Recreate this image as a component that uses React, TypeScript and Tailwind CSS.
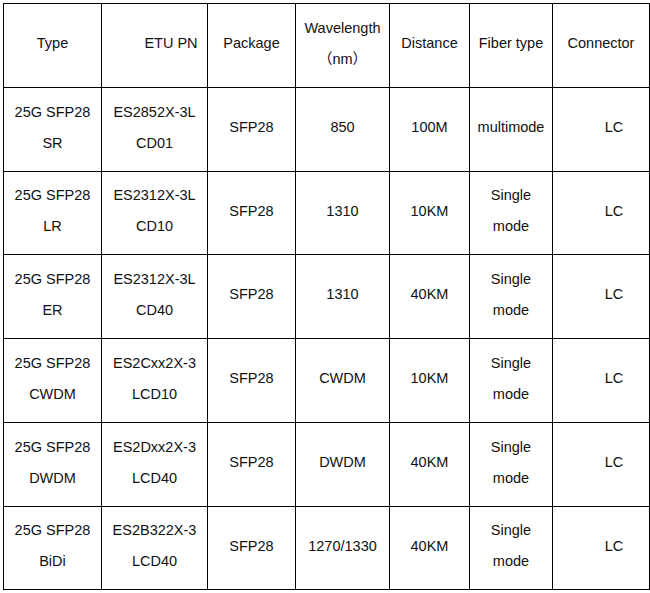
import React from 'react';

type Row = {
  type: [string, string];
  pn: [string, string];
  pkg: string;
  wave: string;
  dist: string;
  fiber: string[];
  h: string;
};

const rows: Row[] = [
  { type: ['25G SFP28', 'SR'], pn: ['ES2852X-3L', 'CD01'], pkg: 'SFP28', wave: '850', dist: '100M', fiber: ['multimode'], h: 'h-[84px]' },
  { type: ['25G SFP28', 'LR'], pn: ['ES2312X-3L', 'CD10'], pkg: 'SFP28', wave: '1310', dist: '10KM', fiber: ['Single', 'mode'], h: 'h-[83px]' },
  { type: ['25G SFP28', 'ER'], pn: ['ES2312X-3L', 'CD40'], pkg: 'SFP28', wave: '1310', dist: '40KM', fiber: ['Single', 'mode'], h: 'h-[84px]' },
  { type: ['25G SFP28', 'CWDM'], pn: ['ES2Cxx2X-3', 'LCD10'], pkg: 'SFP28', wave: 'CWDM', dist: '10KM', fiber: ['Single', 'mode'], h: 'h-[84px]' },
  { type: ['25G SFP28', 'DWDM'], pn: ['ES2Dxx2X-3', 'LCD40'], pkg: 'SFP28', wave: 'DWDM', dist: '40KM', fiber: ['Single', 'mode'], h: 'h-[84px]' },
  { type: ['25G SFP28', 'BiDi'], pn: ['ES2B322X-3', 'LCD40'], pkg: 'SFP28', wave: '1270/1330', dist: '40KM', fiber: ['Single', 'mode'], h: 'h-[83px]' },
];

const widths = ['w-[98px]', 'w-[106px]', 'w-[88px]', 'w-[94px]', 'w-[80px]', 'w-[83px]', 'w-[97px]'];

const Cell: React.FC<{ w: string; extra?: string; lines: string[] }> = ({ w, extra = '', lines }) => (
  <div className={`${w} shrink-0 border-r border-black flex flex-col items-center justify-center text-center pb-[4px] ${extra}`}>
    {lines.map((l, i) => (
      <span key={i} className="whitespace-nowrap">{l}</span>
    ))}
  </div>
);

export default function App() {
  return (
    <div className="w-[650px] h-[593px] bg-white pt-[3px] pl-[3px] text-[#111] text-[14.5px] leading-[31px] [font-family:'Liberation_Sans','Noto_Sans_CJK_SC',Arial,sans-serif]">
      <div className="w-[647px] border-l border-t border-black flex flex-col">
        <div className="h-[84px] flex border-b border-black">
          <Cell w={widths[0]} lines={['Type']} />
          <Cell w={widths[1]} extra="pl-[33px]" lines={['ETU PN']} />
          <Cell w={widths[2]} lines={['Package']} />
          <Cell w={widths[3]} lines={['Wavelength', '（nm）']} />
          <Cell w={widths[4]} lines={['Distance']} />
          <Cell w={widths[5]} lines={['Fiber type']} />
          <Cell w={widths[6]} lines={['Connector']} />
        </div>
        {rows.map((r, i) => (
          <div key={i} className={`${r.h} flex border-b border-black`}>
            <Cell w={widths[0]} lines={r.type} />
            <Cell w={widths[1]} lines={r.pn} />
            <Cell w={widths[2]} lines={[r.pkg]} />
            <Cell w={widths[3]} lines={[r.wave]} />
            <Cell w={widths[4]} lines={[r.dist]} />
            <Cell w={widths[5]} lines={r.fiber} />
            <Cell w={widths[6]} extra="pl-[26px]" lines={['LC']} />
          </div>
        ))}
      </div>
    </div>
  );
}
